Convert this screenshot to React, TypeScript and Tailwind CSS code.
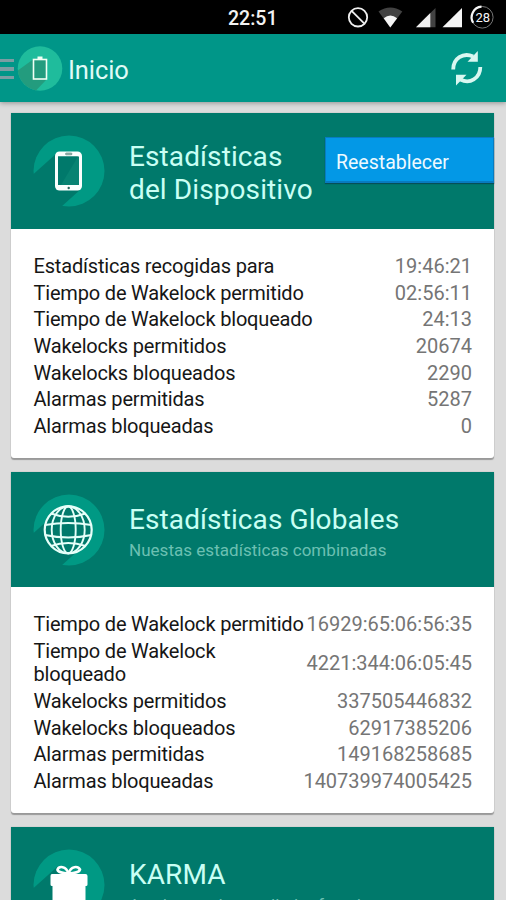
import type { ReactNode } from "react";

type Stat = { label: string; value: string };

const deviceStats: Stat[] = [
  { label: "Estadísticas recogidas para", value: "19:46:21" },
  { label: "Tiempo de Wakelock permitido", value: "02:56:11" },
  { label: "Tiempo de Wakelock bloqueado", value: "24:13" },
  { label: "Wakelocks permitidos", value: "20674" },
  { label: "Wakelocks bloqueados", value: "2290" },
  { label: "Alarmas permitidas", value: "5287" },
  { label: "Alarmas bloqueadas", value: "0" },
];

const globalStats: Stat[] = [
  { label: "Tiempo de Wakelock permitido", value: "16929:65:06:56:35" },
  { label: "Tiempo de Wakelock bloqueado", value: "4221:344:06:05:45" },
  { label: "Wakelocks permitidos", value: "337505446832" },
  { label: "Wakelocks bloqueados", value: "62917385206" },
  { label: "Alarmas permitidas", value: "149168258685" },
  { label: "Alarmas bloqueadas", value: "140739974005425" },
];

function StatusBar() {
  return (
    <div className="flex h-[34px] shrink-0 items-center bg-black pl-[228px]">
      <span className="w-[119px] pt-[3px] text-[19.5px] font-medium leading-none text-[#f2f2f2]">22:51</span>
      <svg width="159" height="34" viewBox="347 0 159 34" className="shrink-0">
        <circle cx="358" cy="17.3" r="9.2" fill="none" stroke="#f0f0f0" strokeWidth="1.8" />
        <path d="M351.6 10.9 364.4 23.7" stroke="#f0f0f0" strokeWidth="1.8" />
        <path d="M390.3 27.5 378.5 11.5Q390.3 3.5 402.3 11.5Z" fill="#424242" />
        <path d="M390.3 27.5 383.7 18.2Q390.3 13 397.1 18.2Z" fill="#f5f5f5" />
        <path d="M416 27.2 435.5 8V27.2Z" fill="#424242" />
        <path d="M416 27.2 430.3 13V27.2Z" fill="#f0f0f0" />
        <path d="M442.5 27.2 462 8V27.2Z" fill="#f5f5f5" />
        <circle cx="482.3" cy="17.3" r="10.8" fill="none" stroke="#777" strokeWidth="1" />
        <path d="M473.2 22.8A10.6 10.6 0 0 1 481.5 6.7" fill="none" stroke="#f5f5f5" strokeWidth="2.2" />
        <text x="482.8" y="21.8" textAnchor="middle" fontFamily="Roboto, sans-serif" fontSize="13" fill="#f5f5f5">28</text>
      </svg>
    </div>
  );
}

function AppBar() {
  return (
    <header className="flex h-[68px] shrink-0 items-center bg-[#009688] shadow-[0_1px_5px_rgba(0,0,0,0.35)]">
      <div className="flex w-[14px] shrink-0 flex-col gap-[5px] pt-[2px]">
        <span className="h-[3.5px] bg-[#7b9da3]" />
        <span className="h-[3.5px] bg-[#7b9da3]" />
        <span className="h-[3.5px] bg-[#7b9da3]" />
      </div>
      <svg width="52" height="68" viewBox="14 34 52 68" className="shrink-0">
        <circle cx="40" cy="68.5" r="22.3" fill="#1fbc9c" />
        <path d="M17.8 70.5 33 59.5 47 79 36 90.4A22.3 22.3 0 0 1 17.8 70Z" fill="#239c7e" />
        <rect x="33.5" y="59.5" width="13" height="19.5" fill="#239c7e" stroke="#f0fff4" strokeWidth="1.6" />
        <path d="M37.5 56.5h5v3h-5z" fill="#f0fff4" />
      </svg>
      <h1 className="ml-[2px] pt-[5px] text-[25.5px] leading-none tracking-[-0.1px] text-[#e0fbf7]">Inicio</h1>
      <svg width="36" height="36" viewBox="449 50.500 36 36" className="mr-[21px] ml-auto">
        <g fill="none" stroke="#d9f7f1" strokeWidth="3.8">
          <path d="M453.2 70C453.2 59 463 52.500 473.200 57" />
          <path d="M480.300 67.500C480.300 79 469.500 85 460.500 80" />
        </g>
        <path d="M477.800 51.500V62.300H467.500Z" fill="#d9f7f1" />
        <path d="M456 86V75.200H466.500Z" fill="#d9f7f1" />
      </svg>
    </header>
  );
}

function Badge({ children }: { children: ReactNode }) {
  return (
    <svg width="72" height="72" viewBox="0 0 72 72" className="mt-[22px] shrink-0">
      <circle cx="36" cy="36" r="35.500" fill="#009984" />
      <path d="M0 39.500 24 18 48 54 28 72H0Z" fill="#00796b" />
      {children}
    </svg>
  );
}

function PhoneGlyph() {
  return (
    <>
      <rect x="22" y="16.500" width="27" height="39" rx="4.500" fill="#fafffd" />
      <rect x="25" y="21.500" width="21" height="28.500" fill="#078372" />
      <path d="M25 21.500h20L28 50h-3z" fill="#00796b" />
      <rect x="32.500" y="18" width="6.500" height="1.800" rx=".9" fill="#a4b9b4" stroke="#4c7d74" strokeWidth=".6" />
      <circle cx="35.700" cy="53" r="1.200" fill="#28685d" />
    </>
  );
}

function GlobeGlyph() {
  return (
    <g fill="none" stroke="#e6fff9" strokeWidth="1.900">
      <circle cx="35.200" cy="35.800" r="23.500" fill="#00796b" strokeWidth="2.200" />
      <ellipse cx="35.200" cy="35.800" rx="16.500" ry="23.500" />
      <ellipse cx="35.200" cy="35.800" rx="7.500" ry="23.500" />
      <path d="M18 19.500Q35.200 26 52.500 19.500M12 31Q35.200 27 58.500 31M12 41Q35.200 46 58.500 41M18 52Q35.200 46 52.500 52" />
    </g>
  );
}

function GiftGlyph() {
  return (
    <>
      <path d="M19 25h33.500q2 0 2 2v8.500q0 1.500-1.500 1.500h-.5V72h-33V37h-.5q-1.500 0-1.500-1.500V27q0-2 1.500-2Z" fill="#fff" />
      <g fill="none" stroke="#fff" strokeWidth="2.600">
        <path d="M35.500 24.500C33 16.500 26 17 24.500 20.500 24.500 23.500 30 24 35.500 24.500Z" />
        <path d="M35.500 24.500C38 16.500 45 17 47 20.500 46.500 23.500 41 24 35.500 24.500Z" />
      </g>
    </>
  );
}

type CardProps = {
  glyph: ReactNode;
  title: ReactNode;
  subtitle?: string;
  stats?: Stat[];
  action?: ReactNode;
};

function Card({ glyph, title, subtitle, stats, action }: CardProps) {
  return (
    <section className="shrink-0 rounded-b-[3px] bg-white shadow-[0_2px_1px_#999,0_0_1px_#888]">
      <div className="relative flex h-[115.5px] bg-[#00796b] pl-[21.5px]">
        <Badge>{glyph}</Badge>
        <div className={subtitle ? "ml-[24.5px] flex flex-col pt-[31px]" : "ml-[24.5px] flex flex-col pt-[27px]"}>
          <h2 className="text-[28px] leading-[33px] tracking-[0.1px] text-[#c9fff4]">{title}</h2>
          {subtitle && (
            <p className="mt-[4px] text-[17px] leading-[20px] tracking-[0.03px] whitespace-nowrap text-[#6cc0b2]">{subtitle}</p>
          )}
        </div>
        {action}
      </div>
      {stats && (
        <dl className="px-[22px] pt-[24.5px] pb-[17.5px] text-[20px] leading-[23.4px]">
          {stats.map((s) => (
            <div key={s.label} className="flex items-center justify-between pt-[1.600px] pb-[1.700px]">
              <dt className="pl-[0.5px] tracking-[-0.18px] text-[#161616]">{s.label}</dt>
              <dd className="whitespace-nowrap text-[#757575]">{s.value}</dd>
            </div>
          ))}
        </dl>
      )}
    </section>
  );
}

export default function App() {
  return (
    <div className="flex h-[900px] w-[506px] flex-col overflow-hidden bg-[#dcdcdc] font-[Roboto,sans-serif]">
      <StatusBar />
      <AppBar />
      <main className="flex flex-col gap-[14px] pt-[11.400px] pr-[12px] pl-[11px]">
        <Card
          glyph={<PhoneGlyph />}
          title={<>Estadísticas<br />del Dispositivo</>}
          stats={deviceStats}
          action={
            <button className="absolute top-[24px] right-0 flex h-[46px] w-[169px] items-center border border-b-2 border-[#087bc0] bg-[#0398e6] pt-[6px] pl-[10px] text-[19.500px] text-[#eefaff] shadow-[0_1px_1px_#054f58]">
              Reestablecer
            </button>
          }
        />
        <Card glyph={<GlobeGlyph />} title="Estadísticas Globales" subtitle="Nuestas estadísticas combinadas" stats={globalStats} />
        <Card glyph={<GiftGlyph />} title="KARMA" subtitle="Ayuda a tu desarrollador favorito" />
      </main>
    </div>
  );
}
